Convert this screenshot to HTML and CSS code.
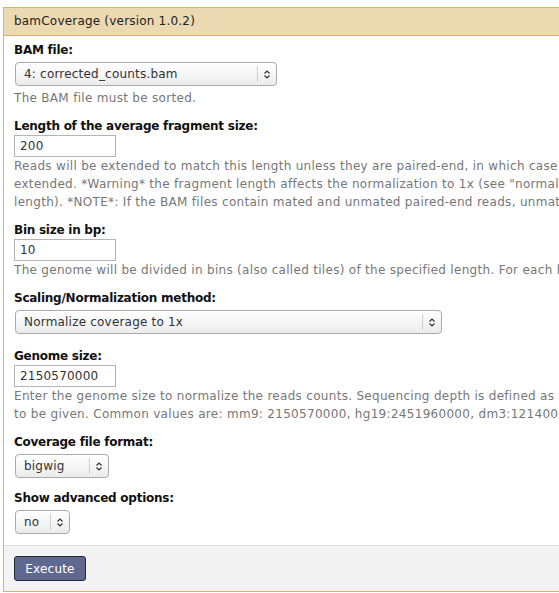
FILE: index.html
```html
<!DOCTYPE html>
<html>
<head>
<meta charset="utf-8">
<link rel="stylesheet" href="styles.css">
</head>
<body>
<div class="tool-form">
  <div class="title">bamCoverage (version 1.0.2)</div>
  <div class="form-body">
    <div class="row">
      <div class="label">BAM file:</div>
      <div class="select w-bam"><span class="val">4: corrected_counts.bam</span><span class="arrow"><svg width="8" height="11" viewBox="0 0 8 11"><path d="M1.5 4.5 L4 2 L6.5 4.5 M1.5 6.5 L4 9 L6.5 6.5" fill="none" stroke="#333" stroke-width="1.2"/></svg></span></div>
      <div class="help">The BAM file must be sorted.</div>
    </div>
    <div class="row">
      <div class="label">Length of the average fragment size:</div>
      <div class="input">200</div>
      <div class="help">Reads will be extended to match this length unless they are paired-end, in which case they will be<br>extended. *Warning* the fragment length affects the normalization to 1x (see "normalize coverage to 1x"). The formula to normalize using the sequencing depth is genomeSize/(number of mapped reads * fragment<br>length). *NOTE*: If the BAM files contain mated and unmated paired-end reads, unmated reads will be extended to match the --fragmentLength.</div>
    </div>
    <div class="row">
      <div class="label">Bin size in bp:</div>
      <div class="input">10</div>
      <div class="help">The genome will be divided in bins (also called tiles) of the specified length. For each bin the overlaping number of fragments (or reads) will be reported in the output file.</div>
    </div>
    <div class="row">
      <div class="label">Scaling/Normalization method:</div>
      <div class="select w-norm"><span class="val">Normalize coverage to 1x</span><span class="arrow"><svg width="8" height="11" viewBox="0 0 8 11"><path d="M1.5 4.5 L4 2 L6.5 4.5 M1.5 6.5 L4 9 L6.5 6.5" fill="none" stroke="#333" stroke-width="1.2"/></svg></span></div>
    </div>
    <div class="row">
      <div class="label">Genome size:</div>
      <div class="input">2150570000</div>
      <div class="help">Enter the genome size to normalize the reads counts. Sequencing depth is defined as the total number of mapped reads * fragment length / effective genome size. The effective genome size has<br>to be given. Common values are: mm9: 2150570000, hg19:2451960000, dm3:121400000 and ce10:93260000.</div>
    </div>
    <div class="row">
      <div class="label">Coverage file format:</div>
      <div class="select w-fmt"><span class="val">bigwig</span><span class="arrow"><svg width="8" height="11" viewBox="0 0 8 11"><path d="M1.5 4.5 L4 2 L6.5 4.5 M1.5 6.5 L4 9 L6.5 6.5" fill="none" stroke="#333" stroke-width="1.2"/></svg></span></div>
    </div>
    <div class="row conditional">
      <div class="label">Show advanced options:</div>
      <div class="select w-no"><span class="val">no</span><span class="arrow"><svg width="8" height="11" viewBox="0 0 8 11"><path d="M1.5 4.5 L4 2 L6.5 4.5 M1.5 6.5 L4 9 L6.5 6.5" fill="none" stroke="#333" stroke-width="1.2"/></svg></span></div>
    </div>
  </div>
  <div class="buttons">
    <button class="execute">Execute</button>
  </div>
</div>
</body>
</html>
```
FILE: styles.css
```css
html, body {
  overflow: hidden;
}
body {
  margin: 7px 0 0 3px;
  background: #fff;
  font-family: "DejaVu Sans", Verdana, sans-serif;
  font-size: 12px;
  line-height: 18px;
  letter-spacing: 0.2px;
  color: #222;
}
.tool-form {
  width: 1400px;
  border: 1px solid #d8b365;
}
.title {
  background: #ebd9b2;
  border-bottom: 1px solid #d8b365;
  padding: 5px 10px;
  line-height: 17px;
  color: #222;
}
.form-body {
  padding: 0 0 1px 0;
}
.row {
  padding: 5px 10px;
}
.row.conditional {
  padding: 3px 10px 7px;
}
.label {
  font-weight: bold;
  color: #111;
  letter-spacing: -0.25px;
}
.help {
  color: #777;
  white-space: nowrap;
  letter-spacing: 0.3px;
}
.input {
  width: 90px;
  height: 20px;
  line-height: 20px;
  border: 1px solid #b4b4b4;
  padding: 0 5px;
  color: #333;
  background: #fff;
}
.select {
  display: flex;
  height: 22px;
  margin: 3px 0 3px 1px;
  border: 1px solid #aaa;
  border-radius: 4px;
  background: linear-gradient(#ffffff, #ececec);
  color: #333;
}
.select .val {
  flex: 1;
  line-height: 22px;
  padding-left: 8px;
  white-space: nowrap;
  overflow: hidden;
}
.select .arrow {
  width: 18px;
  display: flex;
  align-items: center;
  justify-content: center;
  border-left: 1px solid #cfcfcf;
  margin: 3px 0;
}
.w-bam { width: 260px; }
.w-norm { width: 425px; }
.w-fmt { width: 92px; }
.w-no { width: 53px; }
.buttons {
  background: #f3f3f3;
  border-top: 1px solid #dcdcdc;
  padding: 10px;
}
.execute {
  display: block;
  width: 72px;
  height: 25px;
  background: #5f6990;
  border: 1px solid #222838;
  border-radius: 3px;
  color: #fff;
  font-family: "DejaVu Sans", Verdana, sans-serif;
  font-size: 12px;
  letter-spacing: 0.2px;
  padding: 0;
}
```
